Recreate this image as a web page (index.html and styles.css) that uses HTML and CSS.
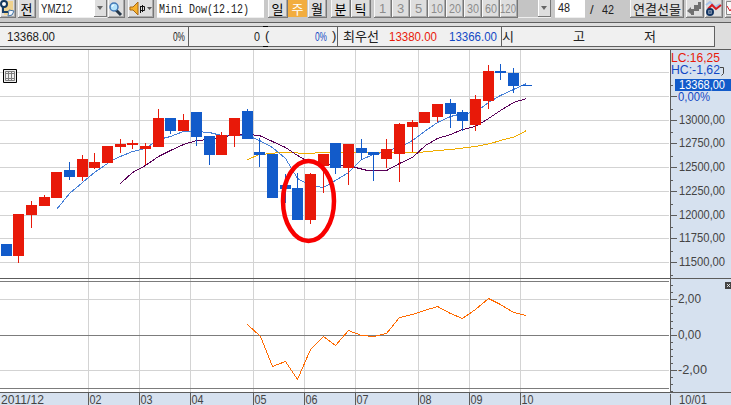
FILE: index.html
```html
<!DOCTYPE html>
<html lang="ko">
<head>
<meta charset="utf-8">
<title>Mini Dow</title>
<link rel="stylesheet" href="styles.css">
</head>
<body>
<header class="toolbar">
  <button class="btn w16"><svg width="16" height="17"><path d="M4 1h9v11l-4 3H4z" fill="#efd28e"/><path d="M9 10l5 1-2 4-4 1z" fill="#f4f8ff" stroke="#4576a6"/><circle cx="4" cy="4" r="3" fill="#fff" stroke="#14395f" stroke-width="2"/><path d="M3 7v5h5" fill="none" stroke="#173f68" stroke-width="2"/></svg></button>
  <button class="btn w18 ml2">전</button>
  <div class="field w68 ml3"><svg class="t" width="54" height="17"><text x="2" y="13" textLength="31" lengthAdjust="spacingAndGlyphs">YMZ12</text></svg><span class="drop"></span></div>
  <button class="btn w17 ml1"><svg width="16" height="16"><path d="M8 9l5 5" stroke="#263849" stroke-width="3"/><circle cx="6" cy="6" r="4" fill="#b6e4fb" stroke="#4479b5" stroke-width="1.5"/><path d="M4 6q0-2 2-2" stroke="#fff" fill="none"/></svg></button>
  <button class="btn w26 ml3"><svg width="25" height="17"><path d="M2 7h3l5-5v13l-5-5H2z" fill="#f7b12c" stroke="#a76814"/><path d="M12.500 6.500h4v4h-4zM12.500 6v7M14.500 5v7" fill="none" stroke="#111"/><path d="M19 7h5l-2.500 3z" fill="#555"/></svg></button>
  <div class="field w107 ml3"><svg class="t" width="106" height="17"><text class="mono" x="2" y="13" textLength="90" lengthAdjust="spacingAndGlyphs">Mini Dow(12.12)</text></svg></div>
  <button class="btn w20 ml4">일</button>
  <button class="btn w20 on">주</button>
  <button class="btn w19">월</button>
  <button class="btn w20 ml4">분</button>
  <button class="btn w20">틱</button>
  <button class="btn w18 off ml3">1</button>
  <button class="btn w18 off">3</button>
  <button class="btn w18 off">5</button>
  <button class="btn w18 off"><svg class="t" width="14" height="17"><text x="1" y="13" textLength="12" lengthAdjust="spacingAndGlyphs">10</text></svg></button>
  <button class="btn w18 off"><svg class="t" width="14" height="17"><text x="1" y="13" textLength="12" lengthAdjust="spacingAndGlyphs">20</text></svg></button>
  <button class="btn w18 off"><svg class="t" width="14" height="17"><text x="1" y="13" textLength="12" lengthAdjust="spacingAndGlyphs">30</text></svg></button>
  <button class="btn w18 off"><svg class="t" width="14" height="17"><text x="1" y="13" textLength="12" lengthAdjust="spacingAndGlyphs">60</text></svg></button>
  <button class="btn w18 off"><svg class="t" width="17" height="17"><text x="0" y="13" textLength="16" lengthAdjust="spacingAndGlyphs">120</text></svg></button>
  <div class="field disabled w33"><span class="drop"></span></div>
  <div class="field w30 ml4"><svg class="t" width="28" height="17"><text x="3" y="12" textLength="12" lengthAdjust="spacingAndGlyphs">48</text></svg></div>
  <svg class="t total" width="45" height="17"><text x="5" y="14">/</text><text x="17" y="14" textLength="12" lengthAdjust="spacingAndGlyphs">42</text></svg>
  <button class="btn w54"><svg class="t" width="52" height="17"><text class="ko" x="2" y="14" textLength="48" lengthAdjust="spacingAndGlyphs">연결선물</text></svg></button>
  <button class="btn w18 ml2"><svg width="17" height="17"><path d="M1 11l4-4v2h3V5h4V2h3v7h-2v2H8v4H5v-1z" fill="#707070"/></svg></button>
  <button class="btn w18 ml1"><svg width="17" height="17"><path d="M1 5l4-3 5 5 5-3" fill="none" stroke="#a6c2e9" stroke-width="2"/><path d="M3 9l4-4 4 4 5-4" fill="none" stroke="#d71920" stroke-width="2"/><circle cx="5" cy="12" r="3" fill="#fff" stroke="#123564" stroke-width="2"/><path d="M5 10v4M3 12h4" stroke="#123564"/></svg></button>
  <button class="btn w18 ml2"><svg width="17" height="17"><path d="M1.500 1.500h12v13h-12z" fill="#f8f8f8" stroke="#888"/><path d="M2 6l3 5 3-5" fill="none" stroke="#d71920"/></svg></button>
</header>
<section class="quotes">
  <div class="row">
    <div class="cell c1"><svg class="t" width="188" height="19"><text x="7" y="14" textLength="48" lengthAdjust="spacingAndGlyphs">13368.00</text><text x="173" y="14" textLength="12" lengthAdjust="spacingAndGlyphs">0%</text></svg></div>
    <div class="cell c2"><svg class="t" width="148" height="19"><text x="65" y="14" textLength="6" lengthAdjust="spacingAndGlyphs">0</text><text x="76" y="13">(</text><text class="blue" x="126" y="14" textLength="12" lengthAdjust="spacingAndGlyphs">0%</text><text x="143" y="13">)</text></svg><i class="grip"></i></div>
    <div class="cell c3"><svg class="t" width="163" height="19"><text class="ko" x="5" y="14" textLength="36" lengthAdjust="spacingAndGlyphs">최우선</text><text class="red" x="51" y="14" textLength="48" lengthAdjust="spacingAndGlyphs">13380.00</text><text class="blue" x="111" y="14" textLength="48" lengthAdjust="spacingAndGlyphs">13366.00</text></svg></div>
    <div class="cell c4"><svg class="t" width="210" height="19"><text class="ko" x="0" y="14">시</text><text class="ko" x="71" y="14">고</text><text class="ko" x="142" y="14">저</text></svg></div>
  </div>
</section>
<main>
<svg class="chart" width="731" height="356" viewBox="0 49 731 356">
  <rect x="0" y="49" width="731" height="356" fill="#fff"/>
  <path d="M671 50h60v355H671zM0 393h731v12H0z" fill="#d6e1ef"/>
  <path class="grid" d="M0 72.500H669M0 96.500H669M0 120.500H669M0 143.500H669M0 167.500H669M0 191.500H669M0 215.500H669M0 238.500H669M0 262.500H669M0 299.500H669M0 370.500H669M88.500 50V392M139.500 50V392M190.500 50V392M253.500 50V392M304.500 50V392M355.500 50V392M418.500 50V392M469.500 50V392M520.500 50V392"/>
  <path class="mid" d="M0 281.500H669M0 335.500H669M0 388.500H669"/>
  <path class="edge" d="M0 49.500H731M0 278.500H731M0 392.500H731M670.500 49V392M670.500 394V405M88.500 393V405M139.500 393V405M190.500 393V405M253.500 393V405M304.500 393V405M355.500 393V405M418.500 393V405M469.500 393V405M520.500 393V405"/>
  <path class="edge" d="M671 96.500h6M671 120.500h6M671 143.500h6M671 167.500h6M671 191.500h6M671 215.500h6M671 238.500h6M671 262.500h6M671 299.500h6M671 335.500h6M671 370.500h6M671 85.500h2M671 109.500h2M671 132.500h2M671 156.500h2M671 180.500h2M671 204.500h2M671 227.500h2M671 251.500h2M671 275.500h2M671 285.500h2M671 292.500h2M671 306.500h2M671 313.500h2M671 321.500h2M671 328.500h2M671 342.500h2M671 349.500h2M671 356.500h2M671 363.500h2M671 377.500h2M671 384.500h2M671 391.500h2"/>

  <g transform="translate(.5 .5)">
  <polyline class="line" stroke="#f0ac00" points="247,159 259,154 272,153 278,152 285,152 310,153 320,152 405,152 418,152 437,150 450,149 475,146 490,143 500,140 515,136 526,130"/>
  <polyline class="line" stroke="#4680d8" points="56,209 69,193 82,182 94,172 107,163 115,158 132,151 145,148 158,139 170,136 183,131 196,131 209,132 221,135 247,135 259,140 272,147 285,158 297,178 310,185 323,187 335,180 348,172 361,159 373,154 386,151 405,144 412,140 424,131 437,122 450,116 462,113 475,112 488,102 500,95 513,89 526,83"/>
  <polyline class="line" stroke="#580058" points="120,183 132,172 145,165 158,156 170,150 183,144 196,140 209,139 221,137 234,134 247,134 259,135 272,141 285,147 297,155 304,159 318,163 342,165 355,167 367,170 386,170 399,163 412,157 425,145 437,138 450,134 462,129 475,126 488,118 500,110 513,102 526,98"/>
  <polyline class="line" stroke="#ff6a00" points="247,324 260,336 272,366 285,361 297,379 310,349 323,336 335,345 348,330 361,335 373,336 386,333 399,317 412,314 424,310 437,306 450,313 462,318 475,309 488,298 500,304 513,312 526,315"/>
  </g>
  <path fill="#e81909" d="M13 214h11v42h-11zM18 256h1v7h-1zM26 205h11v10h-11zM31 201h1v27h-1zM39 197h11v9h-11zM44 195h1v2h-1zM51 172h11v26h-11zM77 159h11v18h-11zM82 155h1v26h-1zM89 162h11v6h-11zM94 153h1v16h-1zM102 146h11v17h-11zM115 144h11v3h-11zM120 139h1v14h-1zM127 143h11v2h-11zM132 140h1v9h-1zM140 146h11v3h-11zM145 143h1v22h-1zM153 118h11v29h-11zM158 109h1v9h-1zM178 120h11v11h-11zM183 114h1v6h-1zM216 135h11v20h-11zM221 132h1v3h-1zM229 118h11v18h-11zM234 136h1v11h-1zM305 174h11v46h-11zM310 173h1v51h-1zM318 154h11v12h-11zM323 166h1v27h-1zM343 144h11v24h-11zM348 168h1v17h-1zM381 149h11v10h-11zM386 139h1v29h-1zM394 124h11v30h-11zM399 123h1v59h-1zM407 122h11v5h-11zM412 120h1v32h-1zM419 112h11v11h-11zM432 104h11v13h-11zM437 117h1v5h-1zM470 99h11v26h-11zM475 95h1v36h-1zM483 71h11v30h-11zM488 65h1v44h-1z"/>
  <path fill="#125bca" d="M1 244h11v12h-11zM64 170h11v7h-11zM69 162h1v18h-1zM165 118h11v13h-11zM170 131h1v3h-1zM191 112h11v25h-11zM196 137h1v9h-1zM204 136h11v19h-11zM209 155h1v10h-1zM242 111h11v28h-11zM247 109h1v2h-1zM254 152h11v3h-11zM259 138h1v29h-1zM267 154h11v44h-11zM280 185h11v4h-11zM285 174h1v29h-1zM292 188h11v32h-11zM297 173h1v15h-1zM330 143h11v25h-11zM335 168h1v6h-1zM356 148h11v5h-11zM361 139h1v21h-1zM368 152h11v3h-11zM373 155h1v26h-1zM445 103h11v11h-11zM450 99h1v29h-1zM457 112h11v9h-11zM462 110h1v21h-1zM495 71h11v2h-11zM500 64h1v16h-1zM508 73h11v13h-11zM513 68h1v25h-1zM521 85h11v1h-11z"/>
  <ellipse class="ring" cx="308.500" cy="201" rx="25.500" ry="40"/>

  <path d="M3.500 69.500h13v13h-13z" fill="#eee" stroke="#000"/>
  <path d="M5.500 71.500h9v9h-9zM5 73.500h9M5 78.500h9M8.500 71v10M11.500 71v10" fill="none" stroke="#808080"/>

  <path d="M720 67.500h3.500v6l-2 2" fill="none" stroke="#444"/>
  <rect x="675" y="79" width="56" height="12" fill="#125bca"/>
  <g class="t axis">
    <text class="red" x="671" y="62" textLength="49" lengthAdjust="spacingAndGlyphs">LC:16,25</text>
    <text class="blue" x="671" y="74" textLength="49" lengthAdjust="spacingAndGlyphs">HC:-1,62</text>
    <text class="white" x="679" y="89" textLength="46" lengthAdjust="spacingAndGlyphs">13368,00</text>
    <text class="blue" x="678" y="101" textLength="32" lengthAdjust="spacingAndGlyphs">0,00%</text>
    <text x="679" y="124" textLength="46" lengthAdjust="spacingAndGlyphs">13000,00</text>
    <text x="679" y="147" textLength="46" lengthAdjust="spacingAndGlyphs">12750,00</text>
    <text x="679" y="171" textLength="46" lengthAdjust="spacingAndGlyphs">12500,00</text>
    <text x="679" y="195" textLength="46" lengthAdjust="spacingAndGlyphs">12250,00</text>
    <text x="679" y="219" textLength="46" lengthAdjust="spacingAndGlyphs">12000,00</text>
    <text x="679" y="242" textLength="46" lengthAdjust="spacingAndGlyphs">11750,00</text>
    <text x="679" y="266" textLength="46" lengthAdjust="spacingAndGlyphs">11500,00</text>
    <text x="678" y="303" textLength="23" lengthAdjust="spacingAndGlyphs">2,00</text>
    <text x="678" y="339" textLength="23" lengthAdjust="spacingAndGlyphs">0,00</text>
    <text x="678" y="374" textLength="29" lengthAdjust="spacingAndGlyphs">-2,00</text>
    <text x="679" y="404" textLength="28" lengthAdjust="spacingAndGlyphs">10/01</text>
    <text x="1" y="404" textLength="43" lengthAdjust="spacingAndGlyphs">2011/12</text>
    <text x="89.500" y="404" textLength="12" lengthAdjust="spacingAndGlyphs">02</text>
    <text x="140.500" y="404" textLength="12" lengthAdjust="spacingAndGlyphs">03</text>
    <text x="191.500" y="404" textLength="12" lengthAdjust="spacingAndGlyphs">04</text>
    <text x="254.500" y="404" textLength="12" lengthAdjust="spacingAndGlyphs">05</text>
    <text x="305.500" y="404" textLength="12" lengthAdjust="spacingAndGlyphs">06</text>
    <text x="356.500" y="404" textLength="12" lengthAdjust="spacingAndGlyphs">07</text>
    <text x="419.500" y="404" textLength="12" lengthAdjust="spacingAndGlyphs">08</text>
    <text x="470.500" y="404" textLength="12" lengthAdjust="spacingAndGlyphs">09</text>
    <text x="521.500" y="404" textLength="12" lengthAdjust="spacingAndGlyphs">10</text>
  </g>
  <rect x="725" y="282" width="6" height="7" fill="#444"/>
  <path d="M727 284l3 3m0-3l-3 3" stroke="#fff" stroke-width=".8"/>
</svg>
</main>
</body>
</html>
```
FILE: styles.css
```css
* { box-sizing: border-box; }
body {
  margin: 0;
  width: 731px;
  height: 405px;
  overflow: hidden;
  background: #dedede;
  font-family: "Liberation Sans", "Noto Sans CJK KR", sans-serif;
}
svg { display: block; flex: none; }

.toolbar {
  display: flex;
  height: 22px;
  background: #c8c8c8;
  overflow: hidden;
}
.btn {
  display: flex;
  flex: none;
  align-items: center;
  justify-content: center;
  height: 18px;
  padding: 0;
  border: solid #777;
  border-width: 0 1px 1px 0;
  box-shadow: inset 1px 0 #f8f8f8, inset -1px -1px #aaa;
  background: #dedede;
  color: #000;
  font: 13px/16px "Noto Sans CJK KR", sans-serif;
  overflow: hidden;
}
.btn.on { background: #f2ad3f; color: #fff; box-shadow: none; border-color: #c8c8c8; }
.btn.off { color: #8c8c8c; font-family: "Liberation Sans", sans-serif; }
.btn.off .t text { fill: #8c8c8c; }

.field {
  display: flex;
  flex: none;
  justify-content: space-between;
  height: 18px;
  background: #fff;
  border-bottom: 1px solid #eee;
}
.disabled { justify-content: flex-end; background: #c4c4c4; }
.drop {
  display: flex;
  flex: none;
  align-items: center;
  justify-content: center;
  width: 13px;
  height: 17px;
  background: #dedede;
  border: solid #777;
  border-width: 0 1px 1px 0;
  box-shadow: inset 1px 0 #fff;
}
.drop::after {
  content: "";
  border: 3px solid transparent;
  border-top: 4px solid #666;
  border-bottom: 0;
}
.total { width: 45px; }

.w16 { width: 16px; } .w17 { width: 17px; } .w18 { width: 18px; }
.w19 { width: 19px; } .w20 { width: 20px; } .w26 { width: 26px; }
.w30 { width: 30px; } .w33 { width: 33px; } .w54 { width: 54px; }
.w68 { width: 68px; } .w107 { width: 107px; }
.ml1 { margin-left: 1px; } .ml2 { margin-left: 2px; }
.ml3 { margin-left: 3px; } .ml4 { margin-left: 4px; }

.t text { font: 13px "Liberation Sans", sans-serif; fill: #222; }
.t text.mono { font: 13px "Liberation Mono", monospace; }
.t text.ko { font: 13px "Noto Sans CJK KR", sans-serif; }
.t text.red { fill: #e81909; }
.t text.blue { fill: #1148c4; }
.t text.white { fill: #fff; }

.quotes {
  height: 27px;
  padding: 3px 16px 2px 0;
  border-top: 1px solid #606060;
}
.row {
  display: flex;
  height: 21px;
  border: solid #606060;
  border-width: 1px 1px 1px 0;
  background: #f0f0f0;
}
.cell { position: relative; flex: none; height: 19px; }
.c1 { width: 189px; border-right: 1px solid #606060; }
.c2 { width: 149px; border-right: 1px solid #606060; }
.c3 { width: 164px; border-right: 1px solid #606060; }
.c4 { width: 210px; }
.grip {
  position: absolute;
  left: 74px;
  top: -1px;
  width: 5px;
  height: 21px;
  border: solid #000;
  border-width: 1px 0;
}

.grid { stroke: #d3d3d3; fill: none; }
.mid { stroke: #7c7c7c; fill: none; }
.edge { stroke: #5c5c5c; fill: none; }
.line { fill: none; stroke-width: 1; shape-rendering: crispEdges; }
.ring { fill: none; stroke: #f80000; stroke-width: 4.5; }
.axis text { font-size: 13px; fill: #444; }
```
